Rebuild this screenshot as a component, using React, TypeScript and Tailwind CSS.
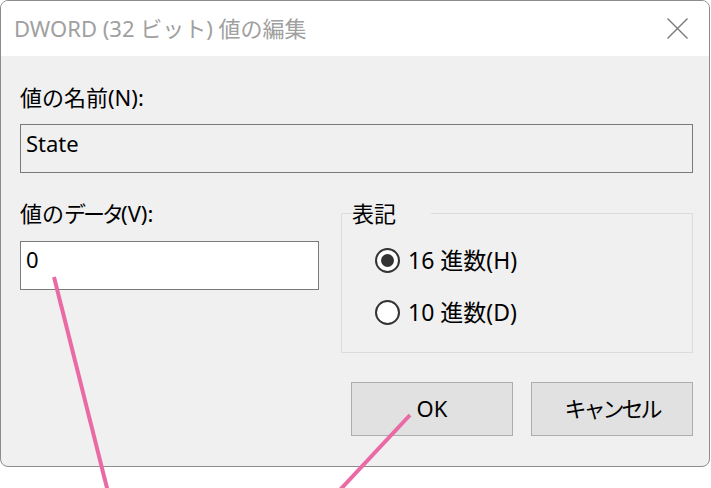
import React from 'react';

const font = { fontFamily: '"Noto Sans", "Noto Sans CJK JP", sans-serif' };

function Radio({ checked, label }: { checked?: boolean; label: string }) {
    return (
        <label className="flex items-center gap-[8px] h-[28px]">
            <span className="w-[25px] h-[25px] rounded-full border-2 border-[#333333] bg-white flex items-center justify-center">
                {checked && <span className="w-[13px] h-[13px] rounded-full bg-[#333333]" />}
            </span>
            <span className="text-[23px]">{label}</span>
        </label>
    );
}

export default function App() {
    return (
        <div className="relative w-[711px] h-[488px] bg-white text-[22px] leading-[28px] text-black" style={font}>
            <div className="w-[710px] h-[467px] rounded-[8px] border border-[#8c8c8c] overflow-hidden flex flex-col bg-[#f0f0f0]">
                {/* title bar */}
                <div className="h-[55px] bg-white flex items-center justify-between pl-[13px] pr-[20px]">
                    <span className="text-[#a0a0a0] pb-[2px]">DWORD (32 ビット) 値の編集</span>
                    <svg width="21" height="21" viewBox="0 0 21 21" className="mr-[1px]">
                        <path d="M0.5 0.5 L20.5 20.5 M20.5 0.5 L0.5 20.5" stroke="#7a7a7a" strokeWidth="1.4" fill="none" />
                    </svg>
                </div>

                <div className="flex-1 pl-[19px] pt-[27px]">
                    <div>値の名前(N):</div>
                    <div className="mt-[13px] w-[673px] h-[49px] border border-[#7a7a7a] bg-[#f0f0f0] flex items-center pl-[5px] pb-[12px]">
                        State
                    </div>

                    <div className="flex gap-[22px]">
                        <div className="w-[299px]">
                            <div className="mt-[26px]">
                                値の<span className="tracking-[-3px]">データ</span>(V):
                            </div>
                            <div className="mt-[14px] h-[49px] border border-[#7a7a7a] bg-white flex items-center pl-[5px] pb-[13px]">
                                0
                            </div>
                        </div>

                        <div className="w-[352px]">
                            <fieldset className="mt-[26px] h-[154px] border border-[#dcdcdc] pl-[33px]">
                                <legend className="ml-[8px] px-[2px] -translate-x-[33px]">表記</legend>
                                <div className="pt-[19px] flex flex-col gap-[24px]">
                                    <Radio checked label="16 進数(H)" />
                                    <Radio label="10 進数(D)" />
                                </div>
                            </fieldset>
                            <div className="mt-[29px] flex justify-end gap-[18px]">
                                <button className="w-[162px] h-[54px] bg-[#e1e1e1] border border-[#adadad] pb-[2px]">OK</button>
                                <button className="w-[162px] h-[54px] bg-[#e1e1e1] border border-[#adadad] pb-[2px] tracking-[-3px]">
                                    キャンセル
                                </button>
                            </div>
                        </div>
                    </div>
                </div>
            </div>

            {/* annotation lines */}
            <svg className="absolute inset-0 pointer-events-none" width="711" height="488">
                <line x1="54" y1="277" x2="108" y2="492" stroke="#ea6aa6" strokeWidth="4" />
                <line x1="410" y1="415" x2="338" y2="492" stroke="#ea6aa6" strokeWidth="4" />
            </svg>
        </div>
    );
}
